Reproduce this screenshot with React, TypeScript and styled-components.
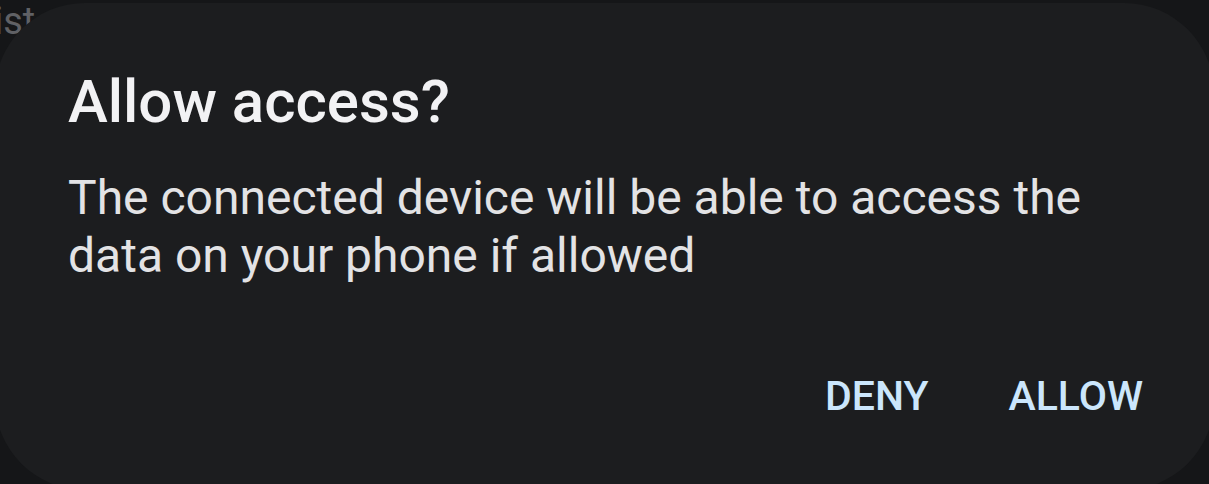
import styled, { createGlobalStyle } from "styled-components"

const GlobalStyle = createGlobalStyle`
    html, body {
        margin: 0;
        padding: 0;
        background: #151618;
        font-family: Roboto, "Noto Sans", sans-serif;
    }
`

const App = () => {
    return (
        <>
            <GlobalStyle />
            <Screen>
                <Backdrop>
                    <BackText>ist</BackText>
                </Backdrop>
                <Dialog>
                    <Title>Allow access?</Title>
                    <Message>
                        The connected device will be able to access the data on your phone if allowed
                    </Message>
                    <Actions>
                        <ActionButton>DENY</ActionButton>
                        <ActionButton>ALLOW</ActionButton>
                    </Actions>
                </Dialog>
            </Screen>
        </>
    )
}

export default App

const Screen = styled.div`
    position: relative;
    width: 1209px;
    height: 484px;
    overflow: hidden;
    background: #151618;
`

const Backdrop = styled.div`
    display: flex;
`

const BackText = styled.span`
    margin-left: -6px;
    font-size: 38px;
    line-height: 42px;
    color: #606165;
`

const Dialog = styled.div`
    position: absolute;
    top: 3px;
    left: -5px;
    right: -5px;
    bottom: -6px;
    background: #1c1d1f;
    border-radius: 90px;
    padding: 64px 71px 0 73px;
    display: flex;
    flex-direction: column;
`

const Title = styled.h1`
    margin: 0;
    font-size: 60px;
    font-weight: 500;
    line-height: 70px;
    color: #f2f2f4;
`

const Message = styled.p`
    margin: 32px 0 0;
    width: 1040px;
    font-size: 48px;
    line-height: 58px;
    color: #e3e3e5;
`

const Actions = styled.div`
    display: flex;
    justify-content: flex-end;
    gap: 80px;
    margin-top: 86px;
`

const ActionButton = styled.button`
    background: none;
    border: none;
    padding: 0;
    font-family: Roboto, "Noto Sans", sans-serif;
    font-size: 41px;
    font-weight: 500;
    line-height: 50px;
    color: #cbe6fc;
`
